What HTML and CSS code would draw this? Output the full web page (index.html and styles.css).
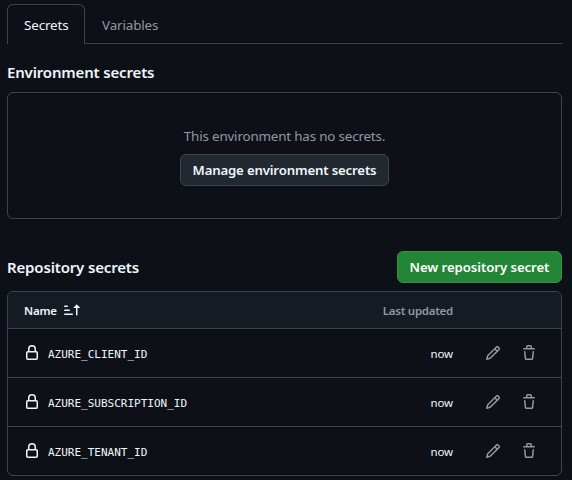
FILE: index.html
```
<!DOCTYPE html>
<html lang="en">
<head>
<meta charset="utf-8">
<title>Actions secrets and variables</title>
<link rel="stylesheet" href="styles.css">
</head>
<body>
<svg class="sprite" aria-hidden="true">
  <symbol id="lock" viewBox="0 0 16 16"><path d="M4 4a4 4 0 0 1 8 0v2h.25c.966 0 1.75.784 1.75 1.75v5.5A1.75 1.75 0 0 1 12.25 15h-8.5A1.75 1.75 0 0 1 2 13.25v-5.5C2 6.784 2.784 6 3.75 6H4Zm8.25 3.5h-8.5a.25.25 0 0 0-.25.25v5.5c0 .138.112.25.25.25h8.5a.25.25 0 0 0 .25-.25v-5.5a.25.25 0 0 0-.25-.25ZM10.5 6V4a2.5 2.5 0 1 0-5 0v2Z"/></symbol>
  <symbol id="pencil" viewBox="0 0 16 16"><path d="M11.013 1.427a1.75 1.75 0 0 1 2.474 0l1.086 1.086a1.75 1.75 0 0 1 0 2.474l-8.61 8.61c-.21.21-.47.364-.756.445l-3.251.93a.75.75 0 0 1-.927-.928l.929-3.25c.081-.286.235-.547.445-.758l8.61-8.61Zm.176 4.823L9.75 4.81l-6.286 6.287a.253.253 0 0 0-.064.108l-.558 1.953 1.953-.558a.253.253 0 0 0 .108-.064Zm1.238-3.763a.25.25 0 0 0-.354 0L10.811 3.75l1.439 1.44 1.263-1.263a.25.25 0 0 0 0-.354Z"/></symbol>
  <symbol id="trash" viewBox="0 0 16 16"><path d="M11 1.75V3h2.25a.75.75 0 0 1 0 1.5H2.75a.75.75 0 0 1 0-1.5H5V1.75C5 .784 5.784 0 6.75 0h2.5C10.216 0 11 .784 11 1.75ZM4.496 6.675l.66 6.6a.25.25 0 0 0 .249.225h5.19a.25.25 0 0 0 .249-.225l.66-6.6a.75.75 0 0 1 1.492.149l-.66 6.6A1.748 1.748 0 0 1 10.595 15h-5.19a1.75 1.75 0 0 1-1.741-1.575l-.66-6.6a.75.75 0 1 1 1.492-.15ZM6.5 1.75V3h3V1.75a.25.25 0 0 0-.25-.25h-2.5a.25.25 0 0 0-.25.25Z"/></symbol>
  <symbol id="sort" viewBox="0 0 16 16"><path d="m12.927 2.573 3 3A.25.25 0 0 1 15.75 6H13.5v6.75a.75.75 0 0 1-1.5 0V6H9.75a.25.25 0 0 1-.177-.427l3-3a.25.25 0 0 1 .354 0ZM0 12.25a.75.75 0 0 1 .75-.75h7.5a.75.75 0 0 1 0 1.5H.75a.75.75 0 0 1-.75-.75Zm0-4a.75.75 0 0 1 .75-.75h4.5a.75.75 0 0 1 0 1.5H.75A.75.75 0 0 1 0 8.25Zm0-4a.75.75 0 0 1 .75-.75h2.5a.75.75 0 0 1 0 1.5H.75A.75.75 0 0 1 0 4.25Z"/></symbol>
</svg>
<nav class="tabs">
  <a class="tab tab-active">Secrets</a>
  <a class="tab">Variables</a>
</nav>
<h2 class="heading">Environment secrets</h2>
<section class="blank">
  <p class="blank-text">This environment has no secrets.</p>
  <button class="btn btn-manage">Manage environment secrets</button>
</section>
<div class="repo-head">
  <h2 class="heading">Repository secrets</h2>
  <button class="btn btn-primary">New repository secret</button>
</div>
<section class="table">
  <div class="row row-head">
    <span class="name">Name</span><svg class="icon sort"><use href="#sort"/></svg>
    <span class="updated">Last updated</span>
  </div>
  <div class="row">
    <svg class="icon lock"><use href="#lock"/></svg><code>AZURE_CLIENT_ID</code>
    <span class="updated">now</span>
    <svg class="icon edit"><use href="#pencil"/></svg><svg class="icon remove"><use href="#trash"/></svg>
  </div>
  <div class="row">
    <svg class="icon lock"><use href="#lock"/></svg><code>AZURE_SUBSCRIPTION_ID</code>
    <span class="updated">now</span>
    <svg class="icon edit"><use href="#pencil"/></svg><svg class="icon remove"><use href="#trash"/></svg>
  </div>
  <div class="row">
    <svg class="icon lock"><use href="#lock"/></svg><code>AZURE_TENANT_ID</code>
    <span class="updated">now</span>
    <svg class="icon edit"><use href="#pencil"/></svg><svg class="icon remove"><use href="#trash"/></svg>
  </div>
</section>
</body>
</html>
```
FILE: styles.css
```
* { box-sizing: border-box; }
body {
  margin: 0;
  padding: 4px 10px 0 7px;
  height: 480px;
  overflow: hidden;
  background: #0d1117;
  color: #f0f6fc;
  font: 13.4px/20px "Noto Sans", "Open Sans", sans-serif;
}
.sprite { display: none; }
.icon { display: block; flex: none; width: 16px; height: 16px; fill: currentColor; }
.tabs { display: flex; height: 40px; border-bottom: 1px solid #3d444d; }
.tab {
  height: 39px;
  padding: 10px 16px 0;
  border: 1px solid transparent;
  border-bottom: 0;
  color: #9198a1;
  letter-spacing: -0.13px;
  white-space: nowrap;
}
.tab-active {
  width: 78px;
  height: 40px;
  border-color: #3d444d;
  border-radius: 6px 6px 0 0;
  background: #0d1117;
  color: #f0f6fc;
}
.heading {
  margin: 0;
  font-size: 15px;
  line-height: 24px;
  font-weight: 600;
  letter-spacing: -0.16px;
  white-space: nowrap;
}
.tabs + .heading { margin-top: 16px; }
.blank {
  display: flex;
  flex-direction: column;
  align-items: center;
  height: 127px;
  margin-top: 8px;
  padding-top: 33px;
  border: 1px solid #3d444d;
  border-radius: 6px;
}
.blank-text { margin: 0 0 8px; color: #9198a1; letter-spacing: -0.18px; white-space: nowrap; }
.btn {
  display: flex;
  align-items: center;
  justify-content: center;
  height: 32px;
  padding: 0;
  border: 1px solid #3d444d;
  border-radius: 6px;
  background: #212830;
  color: #f0f6fc;
  font: 600 13.2px/20px "Noto Sans", "Open Sans", sans-serif;
  white-space: nowrap;
}
.btn-manage { width: 209px; letter-spacing: -0.16px; }
.btn-primary { width: 165px; border-color: #39914a; background: #238636; color: #fff; letter-spacing: -0.07px; }
.repo-head { display: flex; align-items: center; justify-content: space-between; margin: 32px 0 8px; }
.table { border: 1px solid #3d444d; border-radius: 6px; overflow: hidden; }
.row {
  display: flex;
  align-items: center;
  height: 49px;
  padding: 0 24px 0 16px;
  border-top: 1px solid #3d444d;
  font-size: 11.5px;
}
.row-head { height: 36px; padding-right: 108px; border-top: 0; background: #151b23; font-weight: 600; }
.name { padding-top: 2px; letter-spacing: -0.2px; }
.sort { margin-left: 7px; }
.updated { margin-left: auto; padding-top: 2px; white-space: nowrap; letter-spacing: -0.1px; }
.row-head .updated { color: #9198a1; letter-spacing: -0.27px; }
.lock { margin-right: 8px; }
code { padding-top: 3px; font: 11px/16px "DejaVu Sans Mono", monospace; }
.edit, .remove { color: #9198a1; }
.edit { margin-left: 32px; }
.remove { margin-left: 20px; }
```
